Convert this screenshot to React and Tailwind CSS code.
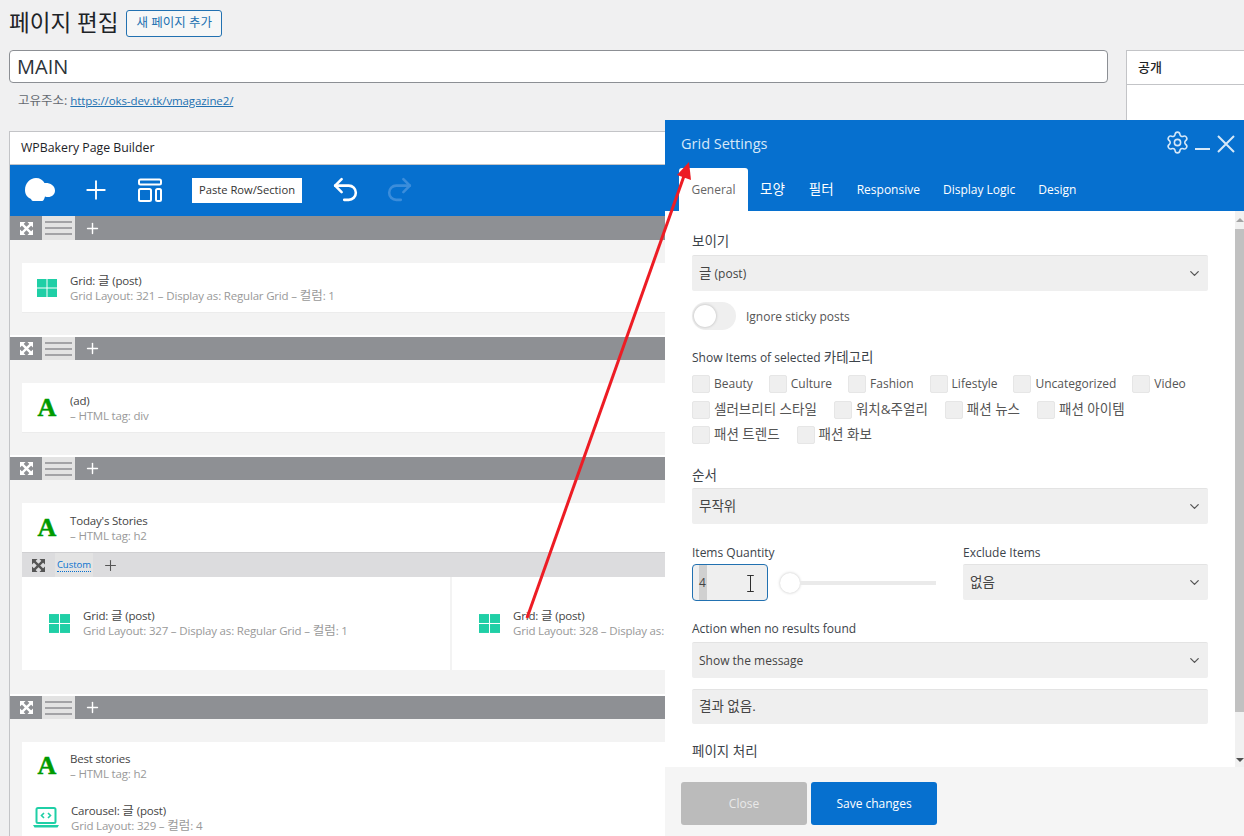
import { ChevronDown, Plus, Redo2, Settings, Undo2 } from "lucide-react";

const MoveIcon = ({ className }) => (
    <svg viewBox="0 0 14 14" className={className} fill="currentColor" stroke="currentColor">
        <path d="M0 0h6L0 6zM14 0v6L8 0zM0 14V8l6 6zM14 14H8l6-6z" strokeWidth="0" />
        <path d="M2 2l10 10M12 2 2 12" strokeWidth="2.6" fill="none" />
    </svg>
);

const GridIcon = ({ className }) => (
    <svg viewBox="0 0 20 18" className={className} fill="#1fcfa6">
        <rect x="0" y="0" width="9.5" height="8.5" />
        <rect x="10.500" y="0" width="9.5" height="8.5" />
        <rect x="0" y="9.5" width="9.5" height="8.5" />
        <rect x="10.500" y="9.5" width="9.5" height="8.5" />
    </svg>
);

const CarouselIcon = () => (
    <svg viewBox="0 0 26 22" className="w-[26px] h-[22px] shrink-0" fill="none">
        <rect x="3.5" y="1" width="19" height="15" rx="1.5" stroke="#1fcfa6" strokeWidth="2" />
        <path d="M0 18h26l-1.5 2.5h-23z" fill="#1fcfa6" />
        <path d="M11 6 8.5 8.5 11 11M15 6l2.5 2.5L15 11" stroke="#1fcfa6" strokeWidth="1.6" />
    </svg>
);

const LetterIcon = () => (
    <span className="w-[20px] shrink-0 text-center font-['Liberation_Serif',serif] font-bold text-[26px] leading-none text-[#009a00] [-webkit-text-stroke:0.5px_#009a00]">A</span>
);

// korean glyphs sit larger than the latin ones in the screenshot
const K = ({ children }) => <span className="text-[13.5px] leading-none font-normal">{children}</span>;
const Ks = ({ children }) => <span className="text-[12.5px] leading-none tracking-normal">{children}</span>;

const RowBar = ({ tall }) => (
    <div className={`${tall ? "h-6" : "h-[23px]"} bg-[#8e9094] flex items-stretch text-white`}>
        <div className="w-[32px] flex items-center justify-center">
            <MoveIcon className="w-[13px] h-[13px]" />
        </div>
        <div className="w-[33px] bg-[#e3e3e3] flex flex-col justify-center gap-[4px] px-[3px]">
            <div className="h-[2px] bg-[#a3a3a6]" />
            <div className="h-[2px] bg-[#a3a3a6]" />
            <div className="h-[2px] bg-[#a3a3a6]" />
        </div>
        <div className="ml-[9px] flex items-center">
            <Plus size={17} strokeWidth={2} />
        </div>
    </div>
);

const ElementText = ({ title, sub }) => (
    <div className="text-[11.5px] leading-[15px] tracking-[-0.18px] whitespace-nowrap">
        <div className="text-[#444]">{title}</div>
        <div className="text-[#999]">{sub}</div>
    </div>
);

const Element = ({ icon, title, sub, gap = "gap-[13px]", pad = "pl-[15px]", h = "h-[49px]" }) => (
    <div className={`${h} ${pad} ${gap} flex items-center`}>
        {icon}
        <ElementText title={title} sub={sub} />
    </div>
);

const Field = ({ children, className }) => (
    <div className={`bg-[#efefef] border-t border-[#e3e3e3] rounded-[2px] flex items-center justify-between pl-[7px] pr-[6px] text-[12px] text-[#444] ${className}`}>
        {children}
    </div>
);

const SelectBox = ({ value, className }) => (
    <Field className={className}>
        <span>{value}</span>
        <ChevronDown size={15} strokeWidth={2} className="text-[#555]" />
    </Field>
);

const Check = ({ label }) => (
    <div className="h-[18px] flex items-center gap-[4px]">
        <div className="w-[18px] h-[18px] bg-[#efefef] border border-[#e6e6e6] rounded-[2px]" />
        <span className="text-[12px] text-[#555]">{label}</span>
    </div>
);

const Label = ({ children, className }) => (
    <div className={`text-[12px] leading-[16px] font-medium text-[#3c434a] ${className}`}>{children}</div>
);

export default function App() {
    return (
        <div className="relative w-[1244px] h-[836px] overflow-hidden bg-[#f0f0f1] font-['Open_Sans','Noto_Sans_CJK_KR',sans-serif]">
            <div className="flex items-center gap-[8px] pl-[9px] h-[47px]">
                <h1 className="text-[22.5px] leading-none text-[#1d2327]">페이지 편집</h1>
                <button className="w-[96px] h-[27px] border border-[#2271b1] rounded-[3px] bg-[#f6f7f7] text-[12.5px] text-[#2271b1]">새 페이지 추가</button>
            </div>

            <div className="flex mt-[3px] pl-[9px]">
                <div className="w-[1099px] shrink-0">
                    <div className="h-[33px] bg-white border border-[#8c8f94] rounded-[4px] flex items-center pl-[7px] pt-[1px] text-[20px] text-[#2c3338]">MAIN</div>
                    <div className="h-[48px] pl-[9px] pt-[9px] text-[11.5px] leading-[18px] text-[#646970]">
                        <span className="text-[12.5px] leading-none">고유주소:</span> <a className="text-[#2271b1] underline tracking-[-0.1px]">https://oks-dev.tk/vmagazine2/</a>
                    </div>
                    <div className="border-l border-t border-r border-[#c3c4c7] bg-[#f3f3f3]">
                        <div className="h-[33px] bg-white border-b border-[#c3c4c7] flex items-center pl-[11px] pt-[1px] text-[12.3px] font-medium text-[#1d2327]">WPBakery Page Builder</div>
                        <div className="h-[51px] bg-[#0670cf] flex items-center pb-[2px] text-white">
                            <svg viewBox="0 0 30 24" className="ml-[15px] w-[30px] h-[24px]" fill="currentColor">
                                <path d="M6 21C2 19.500 0 16 0 12 0 5 5 0 11 0c4 0 7 2 8.500 5 5-.5 10.500 2 10.500 7.500 0 4-3 6.500-7 6.500-1 0-2-.2-3-.6-.5 2-1.500 4.600-3 4.600H8c-1 0-1.500-1-2-2z" />
                            </svg>
                            <Plus size={30} strokeWidth={1.5} className="ml-[26px]" />
                            <svg viewBox="0 0 24 24" className="ml-[27px] w-[24px] h-[24px]" fill="none" stroke="currentColor" strokeWidth="2">
                                <rect x="1" y="1.500" width="22" height="5" rx="1.500" />
                                <rect x="1" y="11" width="12" height="12" rx="1.500" />
                                <rect x="18" y="11" width="5" height="12" rx="1.500" />
                            </svg>
                            <div className="ml-[30px] mt-[2px] w-[110px] h-[25px] bg-white text-[#333] text-[11.2px] flex items-center justify-center">Paste Row/Section</div>
                            <Undo2 size={31} strokeWidth={2} className="ml-[28px]" />
                            <Redo2 size={31} strokeWidth={2} className="ml-[23px] text-[#3b8ddb]" />
                        </div>

                        <RowBar tall />
                        <div className="h-[97px] pt-[23px] pl-[12px] border-b-2 border-white">
                            <div className="h-[50px] bg-white border-b border-[#ececec]">
                                <Element icon={<GridIcon className="w-[20px] h-[18px] shrink-0" />} title={<>Grid: <Ks>글</Ks> (post)</>} sub={<>Grid Layout: 321 – Display as: Regular Grid – <Ks>컬럼</Ks>: 1</>} />
                            </div>
                        </div>

                        <RowBar />
                        <div className="h-[97px] pt-[23px] pl-[12px] border-b-2 border-white">
                            <div className="h-[50px] bg-white border-b border-[#ececec]">
                                <Element icon={<LetterIcon />} title="(ad)" sub="– HTML tag: div" />
                            </div>
                        </div>

                        <RowBar />
                        <div className="h-[216px] pt-[23px] pl-[12px] border-b-2 border-white">
                            <div className="bg-white">
                                <Element icon={<LetterIcon />} title="Today's Stories" sub="– HTML tag: h2" />
                                <div className="h-[25px] bg-[#dcdcde] border-t border-[#d0d0d2] flex items-stretch text-[#555]">
                                    <div className="w-[33px] flex items-center justify-center">
                                        <MoveIcon className="w-[13px] h-[13px]" />
                                    </div>
                                    <div className="w-[38px] bg-[#e3e3e3] flex items-center justify-center">
                                        <span className="text-[9.5px] leading-[12px] text-[#0670cf] border-b border-dotted border-[#0670cf]">Custom</span>
                                    </div>
                                    <div className="ml-[9px] flex items-center">
                                        <Plus size={17} strokeWidth={1.5} />
                                    </div>
                                </div>
                                <div className="h-[93px] flex">
                                    <div className="w-[430px] border-r-2 border-[#f3f3f3] pl-[27px] flex items-center pb-[1px]">
                                        <Element icon={<GridIcon className="w-[21px] h-[19px] shrink-0" />} title={<>Grid: <Ks>글</Ks> (post)</>} sub={<>Grid Layout: 327 – Display as: Regular Grid – <Ks>컬럼</Ks>: 1</>} pad="pl-0" />
                                    </div>
                                    <div className="w-[212px] shrink-0 overflow-hidden pl-[27px] flex items-center pb-[1px]">
                                        <Element icon={<GridIcon className="w-[21px] h-[19px] shrink-0" />} title={<>Grid: <Ks>글</Ks> (post)</>} sub="Grid Layout: 328 – Display as:" pad="pl-0" />
                                    </div>
                                </div>
                            </div>
                        </div>

                        <RowBar />
                        <div className="pt-[23px] pl-[12px]">
                            <div className="bg-white h-[120px] pt-[8px]">
                                <Element icon={<LetterIcon />} title="Best stories" sub="– HTML tag: h2" h="h-[32px]" />
                                <div className="h-[20px]" />
                                <Element icon={<CarouselIcon />} title={<>Carousel: <Ks>글</Ks> (post)</>} sub={<>Grid Layout: 329 – <Ks>컬럼</Ks>: 4</>} pad="pl-[11px]" gap="gap-[12px]" h="h-[32px]" />
                            </div>
                        </div>
                    </div>
                </div>

                <div className="ml-[18px] flex-1 h-[300px] bg-white border-l border-t border-[#c3c4c7]">
                    <div className="h-[34px] border-b border-[#c3c4c7] flex items-center pl-[11px] text-[13px] font-medium text-[#1d2327]">공개</div>
                </div>
            </div>

            {/* settings window */}
            <div className="absolute left-[665px] top-[120px] w-[579px] h-[716px] flex flex-col bg-white">
                <div className="h-[91px] bg-[#0670cf] shrink-0 relative">
                    <div className="pl-[16px] pt-[13px] text-[14.5px] leading-[22px] text-[#d6e8f8]">Grid Settings</div>
                    <div className="absolute right-[9px] top-[10px] flex items-start text-[#d6e8f8]">
                        <Settings size={25} strokeWidth={1.5} />
                        <svg viewBox="0 0 15 2" className="ml-[5px] mt-[18px] w-[15px] h-[2px]" fill="currentColor">
                            <rect width="15" height="2" />
                        </svg>
                        <svg viewBox="0 0 18 18" className="ml-[7px] mt-[5px] w-[18px] h-[18px]" stroke="currentColor" strokeWidth="2" fill="none">
                            <path d="M1 1l16 16M17 1 1 17" />
                        </svg>
                    </div>
                    <div className="absolute left-[14px] bottom-0 h-[43px] flex items-stretch text-[12px] text-white font-medium">
                        <div className="w-[69px] bg-white rounded-t-[3px] flex items-center justify-center text-[#666] font-normal">General</div>
                        <div className="ml-[12px] flex items-center"><K>모양</K></div>
                        <div className="ml-[24px] flex items-center"><K>필터</K></div>
                        <div className="ml-[23px] flex items-center">Responsive</div>
                        <div className="ml-[23px] flex items-center">Display Logic</div>
                        <div className="ml-[23px] flex items-center">Design</div>
                    </div>
                </div>

                <div className="flex-1 flex min-h-0">
                    <div className="flex-1 pl-[27px] pr-[27px] pt-[23px] overflow-hidden">
                        <Label><K>보이기</K></Label>
                        <SelectBox value={<><K>글</K> (post)</>} className="mt-[5px] h-[36px]" />
                        <div className="mt-[11px] flex items-center">
                            <div className="w-[44px] h-[28px] rounded-full bg-[#efefef] pl-[2px] flex items-center">
                                <div className="w-[22px] h-[22px] rounded-full bg-white shadow-[0_0_3px_rgba(0,0,0,0.25)]" />
                            </div>
                            <span className="ml-[10px] pt-[1px] text-[12px] text-[#555]">Ignore sticky posts</span>
                        </div>
                        <Label className="mt-[20px]">Show Items of selected <K>카테고리</K></Label>
                        <div className="mt-[9px] flex flex-col gap-[7.5px]">
                            <div className="flex gap-[16px]">
                                <Check label="Beauty" />
                                <Check label="Culture" />
                                <Check label="Fashion" />
                                <Check label="Lifestyle" />
                                <Check label="Uncategorized" />
                                <Check label="Video" />
                            </div>
                            <div className="flex gap-[17px]">
                                <Check label={<K>셀러브리티 스타일</K>} />
                                <Check label={<K>워치&주얼리</K>} />
                                <Check label={<K>패션 뉴스</K>} />
                                <Check label={<K>패션 아이템</K>} />
                            </div>
                            <div className="flex gap-[17px]">
                                <Check label={<K>패션 트렌드</K>} />
                                <Check label={<K>패션 화보</K>} />
                            </div>
                        </div>
                        <Label className="mt-[24px]"><K>순서</K></Label>
                        <SelectBox value={<K>무작위</K>} className="mt-[4px] h-[36px]" />
                        <div className="mt-[21px] flex">
                            <div className="w-[271px] shrink-0">
                                <Label>Items Quantity</Label>
                                <div className="mt-[3px] flex items-center">
                                    <div className="w-[76px] h-[37px] bg-[#efefef] border border-[#2271b1] rounded-[4px] flex items-center pl-[6px] relative">
                                        <span className="bg-[#d0d0d0] h-full w-[8px] flex items-center text-[12px] text-[#444]">4</span>
                                        <svg viewBox="0 0 9 18" className="absolute left-[53px] top-[10px] w-[9px] h-[17px]" fill="none" stroke="#222" strokeWidth="1">
                                            <path d="M1 .5h7M4.500.5v17M1 17.500h7" />
                                        </svg>
                                    </div>
                                    <div className="ml-[12px] w-[20px] h-[20px] rounded-full bg-white shadow-[0_0_3px_rgba(0,0,0,0.25)] shrink-0" />
                                    <div className="w-[136px] h-[4px] bg-[#eaeaea]" />
                                </div>
                            </div>
                            <div className="flex-1">
                                <Label>Exclude Items</Label>
                                <SelectBox value={<K>없음</K>} className="mt-[3px] h-[36px]" />
                            </div>
                        </div>
                        <Label className="mt-[20px]">Action when no results found</Label>
                        <SelectBox value="Show the message" className="mt-[5px] h-[36px]" />
                        <Field className="mt-[11px] h-[35px]"><K>결과 없음.</K></Field>
                        <Label className="mt-[20px]"><K>페이지 처리</K></Label>
                    </div>
                    <div className="w-[9px] shrink-0 bg-[#f1f1f1] flex flex-col">
                        <div className="h-[18px] flex items-center justify-center">
                            <div className="w-0 h-0 border-x-[4px] border-x-transparent border-b-[4px] border-b-[#a3a3a3]" />
                        </div>
                        <div className="h-[483px] bg-[#c1c1c1]" />
                        <div className="flex-1 flex items-end justify-center pb-[5px]">
                            <div className="w-0 h-0 border-x-[4px] border-x-transparent border-t-[4px] border-t-[#505050]" />
                        </div>
                    </div>
                </div>

                <div className="h-[69px] shrink-0 bg-[#f5f5f5] flex items-start pt-[15px] pl-[16px] gap-[4px]">
                    <button className="w-[126px] h-[43px] bg-[#bbbbbb] rounded-[3px] text-[12px] text-[#e9e9e9]">Close</button>
                    <button className="w-[126px] h-[43px] bg-[#0670cf] rounded-[3px] text-[12px] font-medium text-white">Save changes</button>
                </div>
            </div>

            {/* annotation arrow */}
            <svg viewBox="0 0 1244 836" className="absolute inset-0 w-[1244px] h-[836px] pointer-events-none">
                <line x1="527" y1="618" x2="684" y2="176" stroke="#ed1c24" strokeWidth="3" />
                <polygon points="689,162 677,175 691,180" fill="#ed1c24" />
            </svg>
        </div>
    );
}
